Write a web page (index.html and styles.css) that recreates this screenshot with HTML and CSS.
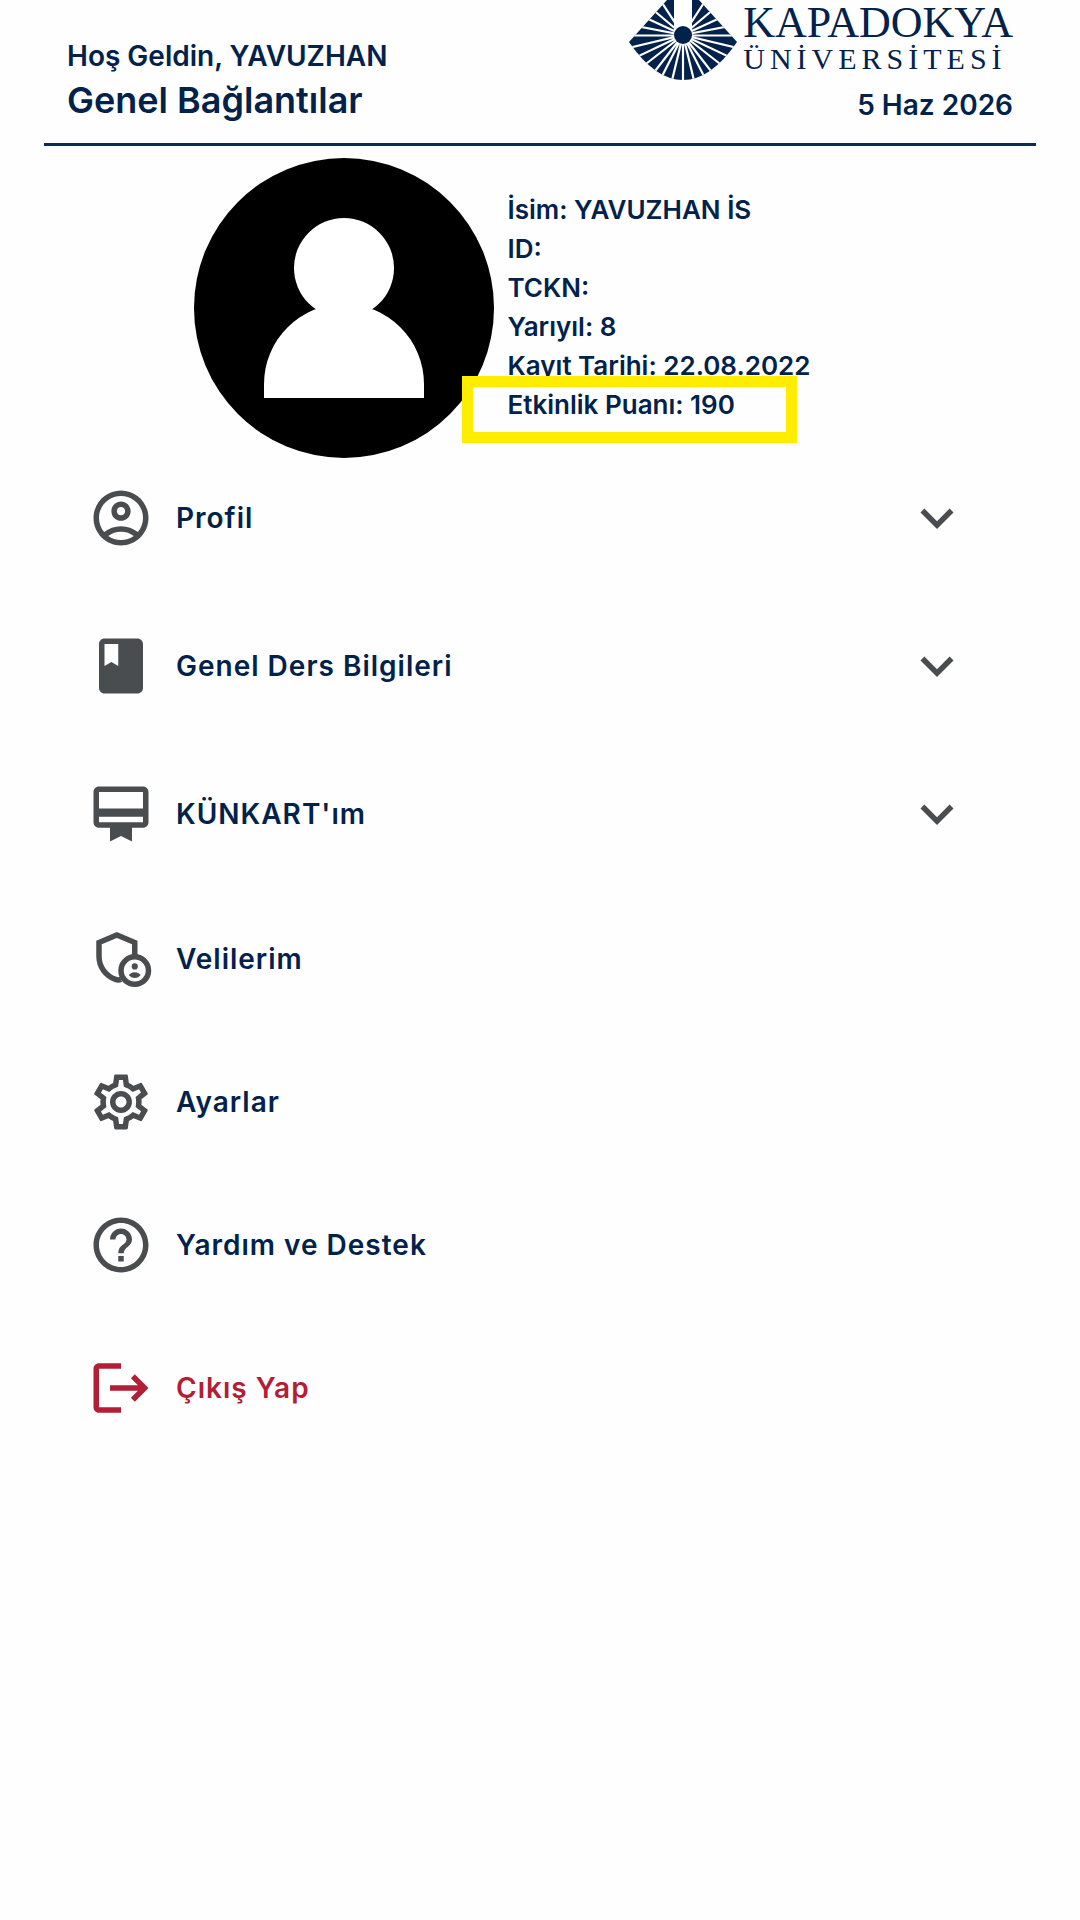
FILE: index.html
```html
<!DOCTYPE html>
<html lang="tr">
<head>
    <meta charset="UTF-8">
    <meta name="viewport" content="width=device-width, initial-scale=1.0">
    <title>Genel Bağlantılar</title>
    <link rel="stylesheet" href="styles.css">
</head>
<body>
    <header class="header">
        <div class="greeting">
            <p class="welcome">Hoş Geldin, YAVUZHAN</p>
            <h1 class="title">Genel Bağlantılar</h1>
        </div>
        <div class="brand">
            <div class="logo">
                <svg class="logo-mark" viewBox="0 0 108 81" aria-hidden="true">
                    <clipPath id="mark">
                        <path d="M38 0H70L108 42Q82 80 54 80Q26 80 0 42Z"/>
                    </clipPath>
                    <g clip-path="url(#mark)">
                        <rect width="108" height="81" fill="#02224b"/>
                        <path d="M-6 35.500H114M54 35L-17 52M54 35L-5 63M54 35L4 74M54 35L16 84M54 35L25 92M54 35L39 97M54 35V98M54 35L69 97M54 35L83 92M54 35L92 84M54 35L104 74M54 35L113 63M54 35L125 52M54 35L-9 23M54 35L4 12M54 35L16 3M54 35L26 -8M54 35L117 23M54 35L104 12M54 35L92 3M54 35L82 -8" stroke="#fff" stroke-width="2.200"/>
                        <path d="M45 0H63V35H45Z" fill="#fff"/>
                    </g>
                    <circle cx="54" cy="35" r="9" fill="#02224b"/>
                </svg>
                <div class="logo-text">
                    <span class="logo-name">KAPADOKYA</span>
                    <span class="logo-sub">ÜNİVERSİTESİ</span>
                </div>
            </div>
            <p class="date">5 Haz 2026</p>
        </div>
    </header>

    <main>
        <!-- Öğrenci bilgileri -->
        <section class="profile">
            <svg class="avatar" viewBox="0 0 300 300" role="img" aria-label="Profil fotoğrafı">
                <circle cx="150" cy="150" r="150" fill="#000"/>
                <circle cx="150" cy="110" r="50" fill="#fff"/>
                <path d="M70 240V226A80 80 0 0 1 230 226V240Z" fill="#fff"/>
            </svg>
            <ul class="info">
                <li>İsim: YAVUZHAN İS</li>
                <li>ID:</li>
                <li>TCKN:</li>
                <li>Yarıyıl: 8</li>
                <li>Kayıt Tarihi: 22.08.2022</li>
                <li class="score"><span>Etkinlik Puanı: 190</span></li>
            </ul>
        </section>

        <!-- Menü -->
        <nav class="menu">
            <button class="item expandable" type="button" aria-expanded="false">
                <svg class="icon" viewBox="0 0 24 24"><path d="M12 2C6.480 2 2 6.480 2 12s4.480 10 10 10 10-4.480 10-10S17.520 2 12 2zM7.350 18.500C8.660 17.560 10.260 17 12 17s3.340.560 4.650 1.500C15.340 19.440 13.740 20 12 20s-3.340-.560-4.650-1.500zm10.790-1.380C16.450 15.800 14.320 15 12 15s-4.450.800-6.140 2.120C4.700 15.730 4 13.950 4 12c0-4.420 3.580-8 8-8s8 3.580 8 8c0 1.950-.700 3.730-1.860 5.120zM12 6c-1.930 0-3.500 1.570-3.500 3.500S10.070 13 12 13s3.500-1.570 3.500-3.500S13.930 6 12 6zm0 5c-.830 0-1.500-.670-1.500-1.500S11.170 8 12 8s1.500.670 1.500 1.500S12.830 11 12 11z"/></svg>
                <span class="label">Profil</span>
                <svg class="icon" viewBox="0 0 24 24"><path d="M16.590 8.590L12 13.170 7.410 8.590 6 10l6 6 6-6z"/></svg>
            </button>
            <button class="item expandable" type="button" aria-expanded="false">
                <svg class="icon" viewBox="0 0 24 24"><path d="M18 2H6c-1.100 0-2 .900-2 2v16c0 1.100.900 2 2 2h12c1.100 0 2-.900 2-2V4c0-1.100-.900-2-2-2zM6 4h5v8l-2.500-1.500L6 12V4z"/></svg>
                <span class="label">Genel Ders Bilgileri</span>
                <svg class="icon" viewBox="0 0 24 24"><path d="M16.590 8.590L12 13.170 7.410 8.590 6 10l6 6 6-6z"/></svg>
            </button>
            <button class="item expandable" type="button" aria-expanded="false">
                <svg class="icon" viewBox="0 0 24 24"><path d="M20 2H4c-1.110 0-2 .890-2 2v11c0 1.110.890 2 2 2h4v5l4-2 4 2v-5h4c1.110 0 2-.890 2-2V4c0-1.110-.890-2-2-2zm0 13H4v-2h16v2zm0-5H4V4h16v6z"/></svg>
                <span class="label">KÜNKART'ım</span>
                <svg class="icon" viewBox="0 0 24 24"><path d="M16.590 8.590L12 13.170 7.410 8.590 6 10l6 6 6-6z"/></svg>
            </button>
            <a class="item" href="#">
                <svg class="icon" viewBox="0 0 24 24">
                    <path d="M12 19.400Q11 19.800 10 19.400C6.300 18 4 14.800 4 11V6l6.500-2.700L17 6v5.500" fill="none" stroke="currentColor" stroke-width="2"/>
                    <circle cx="17" cy="16.200" r="5" fill="#fefefe" stroke="currentColor" stroke-width="2"/>
                    <circle cx="17" cy="14.700" r="1.120"/>
                    <path d="M17 16.800c-.900 0-1.700.400-2.150 1.050.500.700 1.300 1.100 2.150 1.100s1.650-.400 2.150-1.100C18.700 17.200 17.900 16.800 17 16.800z"/>
                </svg>
                <span class="label">Velilerim</span>
            </a>
            <a class="item" href="#">
                <svg class="icon" viewBox="0 0 24 24"><path d="M19.430 12.980c.040-.320.070-.640.070-.980s-.030-.660-.070-.980l2.110-1.650c.190-.150.240-.420.120-.640l-2-3.460c-.090-.160-.260-.250-.440-.250-.060 0-.120.010-.170.030l-2.490 1c-.520-.400-1.080-.730-1.690-.980l-.380-2.650C14.460 2.180 14.250 2 14 2h-4c-.250 0-.460.180-.490.420l-.380 2.650c-.610.250-1.170.590-1.690.980l-2.490-1c-.060-.020-.120-.030-.180-.030-.170 0-.340.090-.430.250l-2 3.460c-.130.220-.070.490.120.640l2.110 1.650c-.040.320-.070.650-.070.980s.030.660.070.980l-2.110 1.650c-.190.150-.240.420-.120.640l2 3.460c.090.160.260.250.440.250.060 0 .120-.010.170-.030l2.490-1c.520.400 1.080.730 1.690.980l.380 2.650c.030.240.240.420.490.420h4c.250 0 .460-.180.490-.420l.380-2.650c.610-.250 1.170-.590 1.690-.980l2.490 1c.060.020.120.030.180.030.170 0 .340-.090.430-.250l2-3.460c.120-.220.070-.490-.120-.640l-2.110-1.650zm-1.980-1.710c.040.310.050.520.050.730 0 .210-.020.430-.050.730l-.140 1.130.890.700 1.080.840-.700 1.210-1.270-.510-1.040-.420-.900.680c-.430.320-.840.560-1.250.730l-1.060.430-.160 1.130-.200 1.350h-1.400l-.190-1.350-.160-1.130-1.060-.430c-.430-.180-.830-.410-1.230-.710l-.910-.700-1.060.430-1.270.510-.700-1.210 1.080-.840.890-.700-.140-1.130c-.030-.310-.050-.540-.050-.740s.020-.430.050-.730l.140-1.130-.890-.700-1.080-.840.700-1.210 1.270.510 1.040.420.900-.680c.430-.320.840-.560 1.250-.730l1.060-.430.160-1.130.200-1.350h1.390l.190 1.350.160 1.130 1.060.430c.430.180.830.410 1.230.710l.910.700 1.060-.430 1.270-.510.700 1.210-1.070.850-.890.700.140 1.130zM12 8c-2.210 0-4 1.790-4 4s1.790 4 4 4 4-1.790 4-4-1.790-4-4-4zm0 6c-1.100 0-2-.900-2-2s.900-2 2-2 2 .900 2 2-.900 2-2 2z"/></svg>
                <span class="label">Ayarlar</span>
            </a>
            <a class="item" href="#">
                <svg class="icon" viewBox="0 0 24 24"><path d="M11 18h2v-2h-2v2zm1-16C6.480 2 2 6.480 2 12s4.480 10 10 10 10-4.480 10-10S17.520 2 12 2zm0 18c-4.410 0-8-3.590-8-8s3.590-8 8-8 8 3.590 8 8-3.590 8-8 8zm0-14c-2.210 0-4 1.790-4 4h2c0-1.100.900-2 2-2s2 .900 2 2c0 2-3 1.750-3 5h2c0-2.250 3-2.500 3-5 0-2.210-1.790-4-4-4z"/></svg>
                <span class="label">Yardım ve Destek</span>
            </a>
            <a class="item logout" href="#">
                <svg class="icon" viewBox="0 0 24 24"><path d="M17 7l-1.410 1.410L18.170 11H8v2h10.170l-2.580 2.580L17 17l5-5zM4 5h8V3H4c-1.100 0-2 .900-2 2v14c0 1.100.900 2 2 2h8v-2H4V5z"/></svg>
                <span class="label">Çıkış Yap</span>
            </a>
        </nav>
    </main>
</body>
</html>
```
FILE: styles.css
```css
/* Genel */
*, *::before {
    box-sizing: border-box;
}

body {
    margin: 0;
    background-color: #fefefe;
    color: #02224b;
    font-family: Inter, Roboto, sans-serif;
    font-weight: 600;
}

p, h1, ul {
    margin: 0;
    padding: 0;
}

/* Üst kısım */
.header {
    display: flex;
    justify-content: space-between;
    align-items: flex-end;
    margin: 0 44px;
    padding: 0 23px 14px;
    border-bottom: 3px solid #0b2b50;
}

.greeting {
    padding-bottom: 7px;
}

.welcome {
    font-size: 28px;
    line-height: 44px;
}

.title {
    font-size: 36px;
    line-height: 44px;
    font-weight: 600;
}

.brand {
    display: flex;
    flex-direction: column;
    align-items: flex-end;
}

.logo {
    display: flex;
    align-items: flex-start;
    gap: 6px;
}

.logo-mark {
    width: 108px;
    height: 81px;
}

.logo-text {
    display: flex;
    flex-direction: column;
    font-family: "Liberation Serif", serif;
    font-weight: 400;
}

.logo-name {
    font-size: 44px;
    line-height: 46px;
}

.logo-sub {
    font-size: 30px;
    line-height: 26px;
    letter-spacing: 5px;
}

.date {
    font-size: 28px;
    line-height: 48px;
}

/* Öğrenci bilgileri */
.profile {
    display: flex;
    justify-content: center;
    align-items: center;
    gap: 14px;
    padding: 12px 76px 24px 0;
}

.avatar {
    width: 300px;
    height: 300px;
}

.info {
    padding-bottom: 2px;
    list-style: none;
    font-size: 26px;
    line-height: 39px;
}

.score {
    position: relative;
}

.score span {
    position: relative;
}

/* Puanın etrafındaki sarı çerçeve */
.score::before {
    content: "";
    position: absolute;
    top: -9px;
    left: -46px;
    width: 335px;
    height: 67px;
    border: 11px solid #ffed00;
    background-color: #fefefe;
}

/* Menü */
.menu {
    display: flex;
    flex-direction: column;
    gap: 77px;
    padding: 0 110px 40px 88px;
}

.item {
    display: flex;
    align-items: center;
    gap: 22px;
    min-height: 66px;
    padding: 0;
    border: none;
    background: none;
    color: #02224b;
    font: inherit;
    font-size: 28px;
    letter-spacing: 1px;
    text-align: left;
    text-decoration: none;
    cursor: pointer;
}

.expandable {
    min-height: 71px;
}

.label {
    flex: 1;
}

.icon {
    width: 66px;
    height: 66px;
    fill: currentColor;
    color: #4a4d50;
}

.logout, .logout .icon {
    color: #b31d35;
}
```
